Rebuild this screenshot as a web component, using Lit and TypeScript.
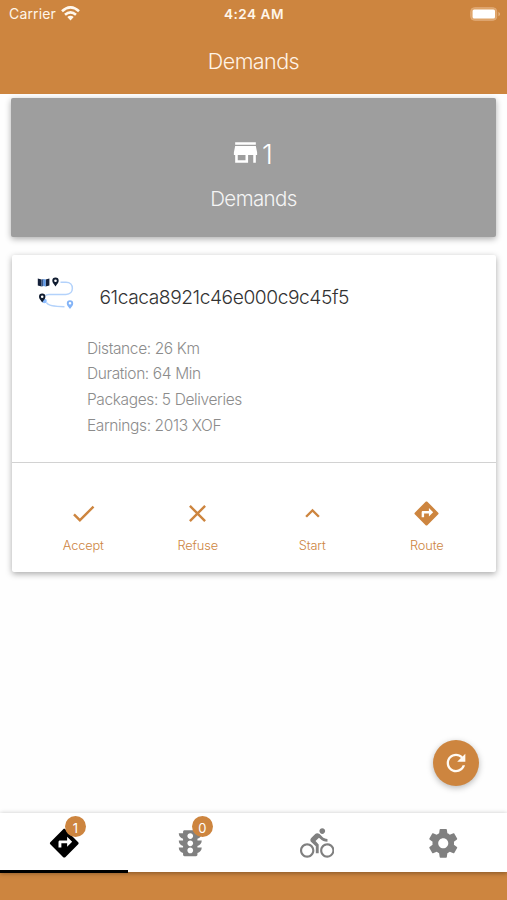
import { LitElement, html, css, svg } from "lit";
import { customElement, property } from "lit/decorators.js";
import { classMap } from "lit/directives/class-map.js";

const ICONS: Record<string, string> = {
  store: "M20 4H4v2h16V4zm1 10v-2l-1-5H4l-1 5v2h1v6h10v-6h4v6h2v-6h1zm-9 4H6v-4h6v4z",
  check: "M9 16.17L4.83 12l-1.42 1.41L9 19 21 7l-1.41-1.41z",
  close: "M19 6.41L17.59 5 12 10.59 6.41 5 5 6.41 10.59 12 5 17.59 6.41 19 12 13.41 17.59 19 19 17.59 13.41 12z",
  up: "M12 8l-6 6 1.41 1.41L12 10.83l4.59 4.58L18 14z",
  directions: "M21.71 11.29l-9-9c-.39-.39-1.02-.39-1.41 0l-9 9c-.39.39-.39 1.02 0 1.41l9 9c.39.39 1.02.39 1.41 0l9-9c.39-.38.39-1.01 0-1.41zM14 14.5V12h-4v3H8v-4c0-.55.45-1 1-1h5V7.5l3.5 3.5-3.5 3.5z",
  refresh: "M17.65 6.35C16.2 4.9 14.21 4 12 4c-4.42 0-7.99 3.58-7.99 8s3.57 8 7.99 8c3.73 0 6.84-2.55 7.73-6h-2.08c-.82 2.33-3.04 4-5.65 4-3.31 0-6-2.69-6-6s2.69-6 6-6c1.66 0 3.14.69 4.22 1.78L13 11h7V4l-2.35 2.35z",
  traffic: "M20 10h-3V8.86c1.72-.45 3-2 3-3.86h-3V4c0-.55-.45-1-1-1H8c-.55 0-1 .45-1 1v1H4c0 1.86 1.28 3.41 3 3.86V10H4c0 1.86 1.28 3.41 3 3.86V15H4c0 1.86 1.28 3.41 3 3.86V20c0 .55.45 1 1 1h8c.55 0 1-.45 1-1v-1.14c1.72-.45 3-2 3-3.86h-3v-1.14c1.72-.45 3-2 3-3.86zm-8 9c-1.11 0-2-.9-2-2s.89-2 2-2c1.1 0 2 .9 2 2s-.89 2-2 2zm0-5c-1.11 0-2-.9-2-2s.89-2 2-2c1.1 0 2 .9 2 2s-.89 2-2 2zm0-5c-1.11 0-2-.9-2-2 0-1.11.89-2 2-2 1.1 0 2 .89 2 2 0 1.1-.89 2-2 2z",
  bike: "M15.5 5.5c1.1 0 2-.9 2-2s-.9-2-2-2-2 .9-2 2 .9 2 2 2zM5 12c-2.8 0-5 2.2-5 5s2.2 5 5 5 5-2.2 5-5-2.2-5-5-5zm0 8.5c-1.9 0-3.5-1.6-3.5-3.5s1.6-3.5 3.5-3.5 3.5 1.6 3.5 3.5-1.6 3.5-3.5 3.5zm5.8-10l2.4-2.4.8.8c1.3 1.3 3 2.1 5.1 2.1V9c-1.5 0-2.7-.6-3.6-1.5l-1.9-1.9c-.5-.4-1-.6-1.6-.6s-1.1.2-1.4.6L7.8 8.4c-.4.4-.6.9-.6 1.4 0 .6.2 1.1.6 1.4L11 14v5h2v-6.2l-2.2-2.3zM19 12c-2.8 0-5 2.2-5 5s2.2 5 5 5 5-2.2 5-5-2.2-5-5-5zm0 8.5c-1.9 0-3.5-1.6-3.5-3.5s1.6-3.5 3.5-3.5 3.5 1.6 3.5 3.5-1.6 3.5-3.5 3.5z",
  settings: "M19.43 12.98c.04-.32.07-.64.07-.98s-.03-.66-.07-.98l2.11-1.65c.19-.15.24-.42.12-.64l-2-3.46c-.12-.22-.39-.3-.61-.22l-2.49 1c-.52-.4-1.08-.73-1.69-.98l-.38-2.65C14.46 2.18 14.25 2 14 2h-4c-.25 0-.46.18-.49.42l-.38 2.65c-.61.25-1.17.59-1.69.98l-2.49-1c-.23-.09-.49 0-.61.22l-2 3.46c-.13.22-.07.49.12.64l2.11 1.65c-.04.32-.07.65-.07.98s.03.66.07.98l-2.11 1.65c-.19.15-.24.42-.12.64l2 3.46c.12.22.39.3.61.22l2.49-1c.52.4 1.08.73 1.69.98l.38 2.65c.03.24.24.42.49.42h4c.25 0 .46-.18.49-.42l.38-2.65c.61-.25 1.17-.59 1.69-.98l2.49 1c.23.09.49 0 .61-.22l2-3.46c.12-.22.07-.49-.12-.64l-2.11-1.65zM12 15.5c-1.93 0-3.5-1.57-3.5-3.5s1.57-3.5 3.5-3.5 3.5 1.57 3.5 3.5-1.57 3.5-3.5 3.5z",
};

@customElement("app-icon")
export class AppIcon extends LitElement {
  @property() name = "";
  static styles = css`
    :host { display: block; flex: none; }
    svg { display: block; width: 100%; height: 100%; fill: currentColor; }
  `;
  render() {
    return html`<svg viewBox="0 0 24 24"><path d=${ICONS[this.name] ?? ""}></path></svg>`;
  }
}

@customElement("status-bar")
export class StatusBar extends LitElement {
  static styles = css`
    :host {
      display: grid; grid-template-columns: 1fr auto 1fr; align-items: center;
      height: 27px; padding: 0 6px 0 9px; box-sizing: border-box; color: #fff6ea;
      font: 400 14px/28px Inter, "Liberation Sans", sans-serif;
    }
    .carrier { display: flex; align-items: center; gap: 6px; letter-spacing: .15px; }
    .time { font-weight: 600; font-size: 13.6px; letter-spacing: .5px; margin-right: 2px; }
    .wifi { width: 19px; height: 15px; display: block; margin: -1px 0 0 -1px; }
    .battery { width: 31px; height: 14px; display: block; justify-self: end; margin-top: -1px; }
  `;
  render() {
    return html`
      <div class="carrier"><span>Carrier</span>
        <svg class="wifi" viewBox="0 0 19 15" fill="none" stroke="#fff8ee" stroke-width="2.6">
          <path d="M1 5.2Q9.5-2.5 18 5.2M4 8.7Q9.5 3.9 15 8.7"></path>
          <path d="M6.3 11.1Q9.5 8.5 12.7 11.1L9.5 14.4z" fill="#fff8ee" stroke="none"></path>
        </svg>
      </div>
      <div class="time">4:24 AM</div>
      <svg class="battery" viewBox="0 0 31 14">
        <rect x=".7" y=".7" width="26" height="12.6" rx="3.8" fill="#dfa468" stroke="#e0ab78"></rect>
        <rect x="2.6" y="2.4" width="22.4" height="9.2" rx="1.6" fill="#fff"></rect>
        <path d="M28.5 4.7q3 2.3 0 4.6z" fill="#e6b98b"></path>
      </svg>`;
  }
}

@customElement("route-art")
export class RouteArt extends LitElement {
  static styles = css`
    :host { display: block; }
    svg { display: block; width: 38px; height: 34px; }
  `;
  private pin(x: number, y: number, color: string) {
    return svg`<path transform="translate(${x} ${y})" fill=${color} fill-rule="evenodd"
      d="M0 0C-2-2.6-3.2-4-3.2-5.6a3.2 3.2 0 0 1 6.4 0C3.2-4 2-2.6 0 0zM0-7a1.3 1.3 0 1 0 0 2.6A1.3 1.3 0 0 0 0-7z"></path>`;
  }
  render() {
    return html`<svg viewBox="0 0 38 34">
      <path d="M23.5 5.2H29c8.5 0 8.5 12.2 0 12.2H12Q8.5 17.4 9 19M9.5 25.5Q11 29.5 27.5 29.7"
        fill="none" stroke="#b3d2fb" stroke-width="1.5"></path>
      <path d="M.8 1.6l3.8 1v7l-3.8-1zM8.6 2.6l3.8-1v7l-3.8 1z" fill="#15213a"></path>
      <path d="M4.6 2.6l2-.7v7l-2 .7z" fill="#34588f"></path>
      <path d="M6.6 1.9l2 .7v7l-2-.7z" fill="#5c9df2"></path>
      <circle cx="7.5" cy="24" r="2.3" fill="#8bbcff"></circle>
      ${this.pin(18.5, 9.4, "#101c30")}
      ${this.pin(5.2, 25.4, "#101c30")}
      ${this.pin(33, 32, "#84b4f7")}
    </svg>`;
  }
}

@customElement("app-root")
export class AppRoot extends LitElement {
  private details = ["Distance: 26 Km", "Duration: 64 Min", "Packages: 5 Deliveries", "Earnings: 2013 XOF"];
  private actions = [
    { icon: "check", label: "Accept" },
    { icon: "close", label: "Refuse" },
    { icon: "up", label: "Start" },
    { icon: "directions", label: "Route" },
  ];
  private tabs = [
    { icon: "directions", badge: "1", active: true },
    { icon: "traffic", badge: "0", active: false },
    { icon: "bike", badge: "", active: false },
    { icon: "settings", badge: "", active: false },
  ];

  static styles = css`
    :host {
      display: flex; flex-direction: column; position: relative;
      height: 900px; box-sizing: border-box; background: #fefefe; overflow: hidden;
      font-family: Inter, "Liberation Sans", sans-serif; font-weight: 300;
    }
    .header { height: 94px; background: #cd853f; flex: none; }
    .title { text-align: center; color: #fff3e6; font-size: 21.5px; line-height: 30px; margin-top: 19px; letter-spacing: -.55px; }
    .content { flex: 1; display: flex; flex-direction: column; gap: 18px; padding: 4px 11px 0; }
    .summary {
      height: 139px; box-sizing: border-box; padding-top: 38px; border-radius: 2px;
      background: #9e9e9e; color: #fff; text-align: center;
      box-shadow: 0 2px 6px rgba(0,0,0,.32);
    }
    .count { display: flex; justify-content: center; align-items: center; height: 36px; gap: 1px; font-size: 27.5px; line-height: 36px; margin-right: 4px; }
    .count app-icon { width: 31px; height: 31px; margin-top: -3px; }
    .caption { margin-top: 12px; font-size: 20.5px; line-height: 30px; letter-spacing: -.6px; color: #f5f5f5; }
    .card {
      height: 317px; box-sizing: border-box; background: #fff; border-radius: 2px; margin-left: 1px;
      box-shadow: 0 2px 6px rgba(0,0,0,.34);
    }
    .top { height: 208px; box-sizing: border-box; border-bottom: 1px solid #d2d2d2; padding: 22px 24px 0 25px; }
    .heading { display: flex; gap: 24.5px; height: 42px; }
    .id { font-size: 19.2px; line-height: 41px; color: #333; letter-spacing: -.44px; white-space: nowrap; }
    .details { padding: 16.5px 0 0 50px; font-size: 15.5px; line-height: 25.7px; color: #8c8c8c; letter-spacing: -.38px; }
    .actions { display: grid; grid-template-columns: repeat(4, 1fr); padding: 36px 12px 0 14px; color: #cd853f; }
    .action { display: flex; flex-direction: column; align-items: center; gap: 8px; font-size: 12.8px; line-height: 20px; letter-spacing: -.15px; }
    .action app-icon { width: 29px; height: 29px; }
    .fab {
      position: absolute; left: 433px; top: 740px; width: 46px; height: 46px; border-radius: 50%;
      background: #cd853f; color: #fffaf3; display: grid; place-items: center;
      box-shadow: 0 2px 6px rgba(0,0,0,.28);
    }
    .fab app-icon { width: 28px; height: 28px; }
    .tabs {
      display: grid; grid-template-columns: repeat(4, 1fr); height: 59px; flex: none;
      background: #fff; color: #808080; position: relative;
      box-shadow: 0 -1px 4px rgba(0,0,0,.1), 0 2px 4px rgba(0,0,0,.25);
    }
    .tab { display: grid; place-items: center; position: relative; }
    .tab app-icon { width: 34.5px; height: 34.5px; margin-top: 1px; }
    .active { color: #000; }
    .active app-icon { margin-left: 1px; }
    .active::after { content: ""; position: absolute; left: 0; bottom: -1px; width: 128px; height: 3px; background: #000; }
    .badge {
      position: absolute; left: 65px; top: 3px; width: 21px; height: 21px; border-radius: 50%;
      background: #cd853f; color: #fff; text-align: center; font-size: 13px; font-weight: 400; line-height: 24px;
    }
    .footer { height: 28px; flex: none; background: #cd853f; }
  `;

  render() {
    return html`
      <div class="header"><status-bar></status-bar><div class="title">Demands</div></div>
      <div class="content">
        <div class="summary">
          <div class="count"><app-icon name="store"></app-icon><span>1</span></div>
          <div class="caption">Demands</div>
        </div>
        <div class="card">
          <div class="top">
            <div class="heading"><route-art></route-art><div class="id">61caca8921c46e000c9c45f5</div></div>
            <div class="details">${this.details.map((d) => html`<div>${d}</div>`)}</div>
          </div>
          <div class="actions">
            ${this.actions.map((a) => html`<div class="action"><app-icon name=${a.icon}></app-icon><span>${a.label}</span></div>`)}
          </div>
        </div>
      </div>
      <div class="tabs">
        ${this.tabs.map((t) => html`<div class=${classMap({ tab: true, active: t.active })}>
          <app-icon name=${t.icon}></app-icon>
          ${t.badge ? html`<span class="badge">${t.badge}</span>` : ""}
        </div>`)}
      </div>
      <div class="footer"></div>
      <div class="fab"><app-icon name="refresh"></app-icon></div>
    `;
  }
}
